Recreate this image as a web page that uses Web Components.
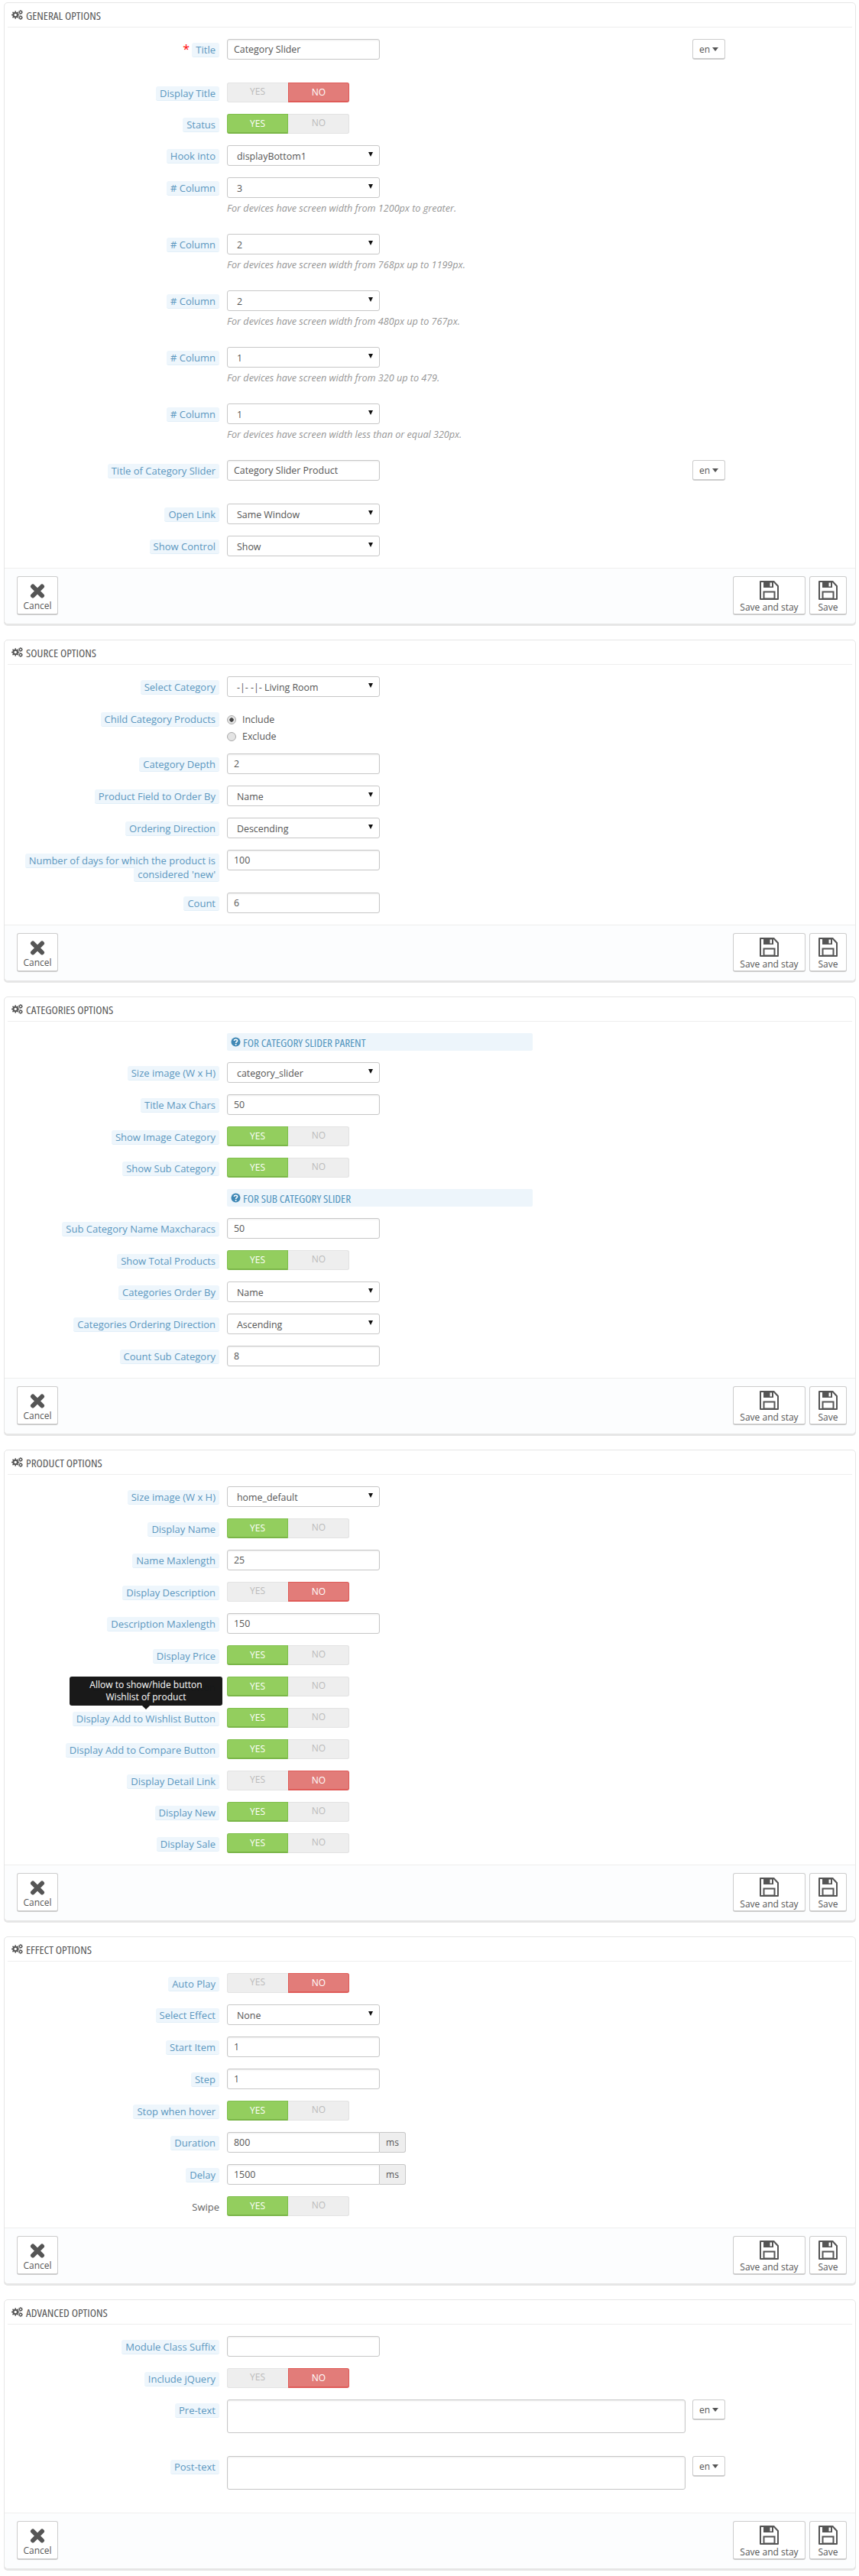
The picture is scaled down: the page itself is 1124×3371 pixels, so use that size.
<!DOCTYPE html>
<html lang="en">
<head>
<meta charset="utf-8">
<title>Category Slider</title>
<style>
    html, body { margin: 0; padding: 0; background: #fff; }
    body {
        padding: 3px 4px 0 5px;
        font-family: "Open Sans", sans-serif;
        font-size: 12px;
        color: #555;
    }
</style>
</head>
<body>

<opt-panel heading="General options">
    <opt-row label="Title" required spaced><opt-lang><opt-input value="Category Slider"></opt-input></opt-lang></opt-row>
    <opt-row label="Display Title"><opt-switch off></opt-switch></opt-row>
    <opt-row label="Status"><opt-switch></opt-switch></opt-row>
    <opt-row label="Hook into"><opt-select value="displayBottom1"></opt-select></opt-row>
    <opt-row label="# Column"><opt-select value="3"></opt-select><opt-help>For devices have screen width from 1200px to greater.</opt-help></opt-row>
    <opt-row label="# Column"><opt-select value="2"></opt-select><opt-help>For devices have screen width from 768px up to 1199px.</opt-help></opt-row>
    <opt-row label="# Column"><opt-select value="2"></opt-select><opt-help>For devices have screen width from 480px up to 767px.</opt-help></opt-row>
    <opt-row label="# Column"><opt-select value="1"></opt-select><opt-help>For devices have screen width from 320 up to 479.</opt-help></opt-row>
    <opt-row label="# Column"><opt-select value="1"></opt-select><opt-help>For devices have screen width less than or equal 320px.</opt-help></opt-row>
    <opt-row label="Title of Category Slider" spaced><opt-lang><opt-input value="Category Slider Product"></opt-input></opt-lang></opt-row>
    <opt-row label="Open Link"><opt-select value="Same Window"></opt-select></opt-row>
    <opt-row label="Show Control"><opt-select value="Show"></opt-select></opt-row>
</opt-panel>

<opt-panel heading="Source options">
    <opt-row label="Select Category"><opt-select value="-|- -|- Living Room"></opt-select></opt-row>
    <opt-row label="Child Category Products"><opt-radios></opt-radios></opt-row>
    <opt-row label="Category Depth"><opt-input value="2"></opt-input></opt-row>
    <opt-row label="Product Field to Order By"><opt-select value="Name"></opt-select></opt-row>
    <opt-row label="Ordering Direction"><opt-select value="Descending"></opt-select></opt-row>
    <opt-row label="Number of days for which the product is considered 'new'"><opt-input value="100"></opt-input></opt-row>
    <opt-row label="Count"><opt-input value="6"></opt-input></opt-row>
</opt-panel>

<opt-panel heading="Categories options">
    <opt-row><opt-info>For category slider parent</opt-info></opt-row>
    <opt-row label="Size image (W x H)"><opt-select value="category_slider"></opt-select></opt-row>
    <opt-row label="Title Max Chars"><opt-input value="50"></opt-input></opt-row>
    <opt-row label="Show Image Category"><opt-switch></opt-switch></opt-row>
    <opt-row label="Show Sub Category"><opt-switch></opt-switch></opt-row>
    <opt-row><opt-info>For sub category slider</opt-info></opt-row>
    <opt-row label="Sub Category Name Maxcharacs"><opt-input value="50"></opt-input></opt-row>
    <opt-row label="Show Total Products"><opt-switch></opt-switch></opt-row>
    <opt-row label="Categories Order By"><opt-select value="Name"></opt-select></opt-row>
    <opt-row label="Categories Ordering Direction"><opt-select value="Ascending"></opt-select></opt-row>
    <opt-row label="Count Sub Category"><opt-input value="8"></opt-input></opt-row>
</opt-panel>

<opt-panel heading="Product options">
    <opt-row label="Size image (W x H)"><opt-select value="home_default"></opt-select></opt-row>
    <opt-row label="Display Name"><opt-switch></opt-switch></opt-row>
    <opt-row label="Name Maxlength"><opt-input value="25"></opt-input></opt-row>
    <opt-row label="Display Description"><opt-switch off></opt-switch></opt-row>
    <opt-row label="Description Maxlength"><opt-input value="150"></opt-input></opt-row>
    <opt-row label="Display Price"><opt-switch></opt-switch></opt-row>
    <opt-row label="Display Add to Cart Button"><opt-switch></opt-switch></opt-row>
    <opt-row label="Display Add to Wishlist Button" tip="Allow to show/hide button Wishlist of product"><opt-switch></opt-switch></opt-row>
    <opt-row label="Display Add to Compare Button"><opt-switch></opt-switch></opt-row>
    <opt-row label="Display Detail Link"><opt-switch off></opt-switch></opt-row>
    <opt-row label="Display New"><opt-switch></opt-switch></opt-row>
    <opt-row label="Display Sale"><opt-switch></opt-switch></opt-row>
</opt-panel>

<opt-panel heading="Effect options">
    <opt-row label="Auto Play"><opt-switch off></opt-switch></opt-row>
    <opt-row label="Select Effect"><opt-select value="None"></opt-select></opt-row>
    <opt-row label="Start Item"><opt-input value="1"></opt-input></opt-row>
    <opt-row label="Step"><opt-input value="1"></opt-input></opt-row>
    <opt-row label="Stop when hover"><opt-switch></opt-switch></opt-row>
    <opt-row label="Duration"><opt-input value="800" suffix="ms"></opt-input></opt-row>
    <opt-row label="Delay"><opt-input value="1500" suffix="ms"></opt-input></opt-row>
    <opt-row label="Swipe" plain><opt-switch></opt-switch></opt-row>
</opt-panel>

<opt-panel heading="Advanced options">
    <opt-row label="Module Class Suffix"><opt-input></opt-input></opt-row>
    <opt-row label="Include jQuery"><opt-switch off></opt-switch></opt-row>
    <opt-row label="Pre-text" spaced><opt-lang><opt-input area></opt-input></opt-lang></opt-row>
    <opt-row label="Post-text" spaced><opt-lang><opt-input area></opt-input></opt-lang></opt-row>
</opt-panel>

<script>
// builds one gear as an svg path, hole cut out with evenodd
function gearPath(cx, cy, outer, inner, hole, teeth) {
    let d = '';
    const step = Math.PI * 2 / teeth;
    for (let i = 0; i < teeth; i++) {
        const a = i * step;
        const pts = [[inner, a - step * 0.5], [inner, a - step * 0.27], [outer, a - step * 0.17], [outer, a + step * 0.17], [inner, a + step * 0.27]];
        pts.forEach(([r, t], j) => {
            d += (i === 0 && j === 0 ? 'M' : 'L') + (cx + r * Math.cos(t)).toFixed(2) + ' ' + (cy + r * Math.sin(t)).toFixed(2);
        });
    }
    d += 'Z';
    d += `M${cx - hole} ${cy}a${hole} ${hole} 0 1 0 ${hole * 2} 0a${hole} ${hole} 0 1 0 ${-hole * 2} 0Z`;
    return d;
}

const cogsIcon = `<svg width="15" height="13" viewBox="0 0 15 13" fill="#555" fill-rule="evenodd">
    <path d="${gearPath(5.2, 6.5, 5.2, 3.9, 1.7, 8)}"/>
    <path d="${gearPath(12, 3, 3, 2.2, 1, 7)}"/>
    <path d="${gearPath(12, 10, 3, 2.2, 1, 7)}"/>
</svg>`;

const processIcons = {
    cancel: `<svg width="20" height="19" viewBox="0 0 20 19"><path d="M4 3.5 16 15.5M16 3.5 4 15.5" stroke="#555" stroke-width="6" stroke-linecap="round" fill="none"/></svg>`,
    save: `<svg width="25" height="25" viewBox="0 0 25 25">
        <path d="M1 1H18.5L24 7V24H1Z" fill="#fff" stroke="#555" stroke-width="2" stroke-linejoin="round"/>
        <path d="M5 1H18V9H5Z" fill="#555"/><path d="M13.5 2.5H16V7.5H13.5Z" fill="#fff"/>
        <path d="M5.5 14.5H19.5V23.5H5.5Z" fill="#fff" stroke="#555" stroke-width="2"/>
    </svg>`
};

// no light condensed face here, so stretch the normal one
const headFont = `font-family: "Open Sans", sans-serif;
                    font-stretch: 75%;
                    font-weight: 400;
                    font-size: 15.2px;
                    text-transform: uppercase;`;

class OptPanel extends HTMLElement {
    constructor() {
        super();
        this.attachShadow({ mode: 'open' });
    }

    connectedCallback() {
        const heading = this.getAttribute('heading') || '';
        this.shadowRoot.innerHTML = `
            <style>
                :host {
                    display: block;
                    background: #fff;
                    border: 1px solid #e6e6e6;
                    border-radius: 5px;
                    box-shadow: 0 2px 0 #e6e6e6;
                    margin-bottom: 20px;
                }
                .head {
                    display: flex;
                    align-items: center;
                    gap: 4px;
                    height: 31px;
                    margin: 0 4px;
                    padding-left: 5px;
                    border-bottom: 1px solid #eee;
                    ${headFont}
                    color: #555;
                }
                .head svg { flex: none; }
                .body { padding: 15px 0 0; }
                .foot {
                    display: flex;
                    align-items: flex-start;
                    gap: 5px;
                    height: 51px;
                    padding: 10px 11px 11px 16px;
                    background: #fcfdfe;
                    border-top: 1px solid #eee;
                    border-radius: 0 0 5px 5px;
                }
                .spacer { flex: 1; }
            </style>
            <div class="head">${cogsIcon}<span></span></div>
            <div class="body"><slot></slot></div>
            <div class="foot">
                <opt-btn icon="cancel" text="Cancel" w="54"></opt-btn>
                <div class="spacer"></div>
                <opt-btn icon="save" text="Save and stay" w="95"></opt-btn>
                <opt-btn icon="save" text="Save" w="49"></opt-btn>
            </div>
        `;
        this.shadowRoot.querySelector('.head span').textContent = heading;
    }
}

class OptRow extends HTMLElement {
    constructor() {
        super();
        this.attachShadow({ mode: 'open' });
    }

    connectedCallback() {
        const label = this.getAttribute('label') || '';
        const tip = this.getAttribute('tip');
        const star = this.hasAttribute('required') ? '<b>*</b> ' : '';
        this.shadowRoot.innerHTML = `
            <style>
                :host {
                    display: grid;
                    grid-template-columns: 281px 1fr;
                    column-gap: 10px;
                    margin-bottom: 15px;
                }
                :host([spaced]) { margin-bottom: 30px; }
                .label {
                    position: relative;
                    padding-top: 5px;
                    padding-left: 10px;
                    text-align: right;
                    font-size: 13px;
                    line-height: 18px;
                    color: #666;
                }
                .label b { color: #f00; font-weight: 400; font-size: 16px; line-height: 10px; }
                .pill {
                    padding: 0 5px;
                    background: #eef6fc;
                    border-bottom: 1px solid #e2eff8;
                    border-radius: 3px;
                    color: #5b97bf;
                    -webkit-box-decoration-break: clone;
                    box-decoration-break: clone;
                }
                :host([plain]) .pill {
                    padding: 0;
                    background: none;
                    border: 0;
                    color: #666;
                }
                .tip {
                    position: absolute;
                    left: 85px;
                    top: -41px;
                    box-sizing: border-box;
                    width: 200px;
                    height: 38px;
                    padding: 3px 20px;
                    background: rgba(20, 20, 20, .98);
                    border-radius: 3px;
                    color: #fff;
                    text-align: center;
                    font-size: 12px;
                    line-height: 16px;
                }
                .tip::after {
                    content: "";
                    position: absolute;
                    left: 95px;
                    bottom: -5px;
                    border: 5px solid transparent;
                    border-bottom: 0;
                    border-top-color: #141414;
                }
            </style>
            <div class="label">${star}<span class="pill"></span>${tip ? '<div class="tip"></div>' : ''}</div>
            <div class="control"><slot></slot></div>
        `;
        const pill = this.shadowRoot.querySelector('.pill');
        if (label) {
            pill.textContent = label;
        } else {
            pill.remove();
        }
        if (tip) {
            this.shadowRoot.querySelector('.tip').textContent = tip;
        }
    }
}

class OptInput extends HTMLElement {
    constructor() {
        super();
        this.attachShadow({ mode: 'open' });
    }

    connectedCallback() {
        const suffix = this.getAttribute('suffix');
        this.shadowRoot.innerHTML = `
            <style>
                :host { display: flex; }
                .box {
                    box-sizing: border-box;
                    width: 200px;
                    height: 27px;
                    padding: 0 8px;
                    background: #fff;
                    border: 1px solid #c7c7c7;
                    border-radius: 3px;
                    box-shadow: inset 0 1px 2px rgba(0, 0, 0, .08);
                    font-size: 12.4px;
                    line-height: 25px;
                    color: #555;
                }
                :host([area]) .box { width: 600px; height: 44px; }
                :host([suffix]) .box { border-radius: 3px 0 0 3px; }
                .addon {
                    box-sizing: border-box;
                    width: 34px;
                    height: 27px;
                    background: #eee;
                    border: 1px solid #c7c7c7;
                    border-left: 0;
                    border-radius: 0 3px 3px 0;
                    text-align: center;
                    line-height: 25px;
                }
            </style>
            <div class="box"></div>${suffix ? '<div class="addon"></div>' : ''}
        `;
        this.shadowRoot.querySelector('.box').textContent = this.getAttribute('value') || '';
        if (suffix) {
            this.shadowRoot.querySelector('.addon').textContent = suffix;
        }
    }
}

class OptSelect extends HTMLElement {
    constructor() {
        super();
        this.attachShadow({ mode: 'open' });
    }

    connectedCallback() {
        this.shadowRoot.innerHTML = `
            <style>
                :host {
                    display: block;
                    position: relative;
                    box-sizing: border-box;
                    width: 200px;
                    height: 27px;
                    padding-left: 12px;
                    background: #fff;
                    border: 1px solid #c7c7c7;
                    border-radius: 3px;
                    font-size: 12.4px;
                    line-height: 27px;
                    color: #555;
                }
                :host::after {
                    content: "";
                    position: absolute;
                    right: 8px;
                    top: 8px;
                    border: 3px solid transparent;
                    border-bottom: 0;
                    border-top: 6px solid #111;
                }
            </style>
            <span></span>
        `;
        this.shadowRoot.querySelector('span').textContent = this.getAttribute('value');
    }
}

class OptSwitch extends HTMLElement {
    constructor() {
        super();
        this.attachShadow({ mode: 'open' });
    }

    connectedCallback() {
        const off = this.hasAttribute('off');
        this.shadowRoot.innerHTML = `
            <style>
                :host {
                    display: flex;
                    width: 160px;
                    height: 26px;
                    background: #eee;
                    border-radius: 3px;
                    box-shadow: inset 0 0 0 1px #e3e3e3;
                }
                div {
                    box-sizing: border-box;
                    width: 80px;
                    height: 26px;
                    line-height: 24px;
                    text-align: center;
                    color: #bbb;
                }
                .yes.on {
                    background: #93ce5e;
                    border: 1px solid #80bf4e;
                    border-bottom: 2px solid #7ab648;
                    border-radius: 3px 0 0 3px;
                    line-height: 23px;
                    color: #fff;
                }
                .no.on {
                    background: #e27c79;
                    border: 1px solid #df5b58;
                    border-bottom: 2px solid #df5b58;
                    border-radius: 0 3px 3px 0;
                    line-height: 23px;
                    color: #fff;
                }
            </style>
            <div class="yes ${off ? '' : 'on'}">YES</div>
            <div class="no ${off ? 'on' : ''}">NO</div>
        `;
    }
}

class OptLang extends HTMLElement {
    constructor() {
        super();
        this.attachShadow({ mode: 'open' });
    }

    connectedCallback() {
        this.shadowRoot.innerHTML = `
            <style>
                :host {
                    display: grid;
                    grid-template-columns: 600px 43px;
                    column-gap: 9px;
                    align-items: start;
                }
                .en {
                    display: flex;
                    align-items: center;
                    justify-content: center;
                    gap: 3px;
                    box-sizing: border-box;
                    height: 27px;
                    background: #fff;
                    border: 1px solid #ccc;
                    border-bottom-width: 2px;
                    border-radius: 3px;
                    color: #555;
                }
                .en i {
                    border: 4px solid transparent;
                    border-bottom: 0;
                    border-top: 5px solid #555;
                }
            </style>
            <slot></slot>
            <div class="en">en<i></i></div>
        `;
    }
}

class OptHelp extends HTMLElement {
    constructor() {
        super();
        this.attachShadow({ mode: 'open' });
        this.shadowRoot.innerHTML = `
            <style>
                :host {
                    display: block;
                    margin-top: 5px;
                    height: 27px;
                    font-size: 12.6px;
                    line-height: 18px;
                    font-style: italic;
                    color: #959595;
                }
            </style>
            <slot></slot>
        `;
    }
}

class OptInfo extends HTMLElement {
    constructor() {
        super();
        this.attachShadow({ mode: 'open' });
        this.shadowRoot.innerHTML = `
            <style>
                :host {
                    display: flex;
                    align-items: center;
                    gap: 3px;
                    box-sizing: border-box;
                    width: 400px;
                    height: 23px;
                    padding-left: 5px;
                    background: #edf5fb;
                    border-radius: 2px;
                    ${headFont}
                    color: #4f93bd;
                }
                svg { flex: none; }
            </style>
            <svg width="13" height="13" viewBox="0 0 13 13">
                <circle cx="6.5" cy="6.5" r="6" fill="#3f88b5"/>
                <path d="M4.4 5.1C4.4 3.8 5.4 3.2 6.5 3.2S8.6 3.9 8.6 5C8.6 6.3 6.6 6.4 6.6 7.9" fill="none" stroke="#fff" stroke-width="1.6"/>
                <path d="M5.7 9H7.5V10.7H5.7Z" fill="#fff"/>
            </svg>
            <span><slot></slot></span>
        `;
    }
}

class OptRadios extends HTMLElement {
    constructor() {
        super();
        this.attachShadow({ mode: 'open' });
        this.shadowRoot.innerHTML = `
            <style>
                :host { display: block; height: 44px; padding-top: 3px; margin-bottom: -3px; }
                div {
                    display: flex;
                    align-items: center;
                    gap: 8px;
                    height: 22px;
                    font-size: 12.4px;
                    color: #555;
                }
                i {
                    box-sizing: border-box;
                    width: 12px;
                    height: 12px;
                    margin-top: 2px;
                    border: 1px solid #aaa;
                    border-radius: 50%;
                    background: #e4e4e4;
                }
                i.on { background: radial-gradient(circle, #444 0 2.4px, #e4e4e4 3px); }
            </style>
            <div><i class="on"></i>Include</div>
            <div><i></i>Exclude</div>
        `;
    }
}

class OptBtn extends HTMLElement {
    constructor() {
        super();
        this.attachShadow({ mode: 'open' });
    }

    connectedCallback() {
        const icon = this.getAttribute('icon');
        this.shadowRoot.innerHTML = `
            <style>
                :host {
                    display: flex;
                    flex-direction: column;
                    align-items: center;
                    box-sizing: border-box;
                    width: ${this.getAttribute('w')}px;
                    height: 51px;
                    padding-top: ${icon === 'cancel' ? 9 : 5}px;
                    background: #fff;
                    border: 1px solid #ccc;
                    border-bottom-width: 2px;
                    border-radius: 3px;
                    color: #555;
                    white-space: nowrap;
                }
                svg { display: block; flex: none; }
                span { line-height: 16px; margin-top: 2px; }
            </style>
            ${processIcons[icon]}
            <span></span>
        `;
        this.shadowRoot.querySelector('span').textContent = this.getAttribute('text');
    }
}

customElements.define('opt-panel', OptPanel);
customElements.define('opt-row', OptRow);
customElements.define('opt-input', OptInput);
customElements.define('opt-select', OptSelect);
customElements.define('opt-switch', OptSwitch);
customElements.define('opt-lang', OptLang);
customElements.define('opt-help', OptHelp);
customElements.define('opt-info', OptInfo);
customElements.define('opt-radios', OptRadios);
customElements.define('opt-btn', OptBtn);
</script>
</body>
</html>
